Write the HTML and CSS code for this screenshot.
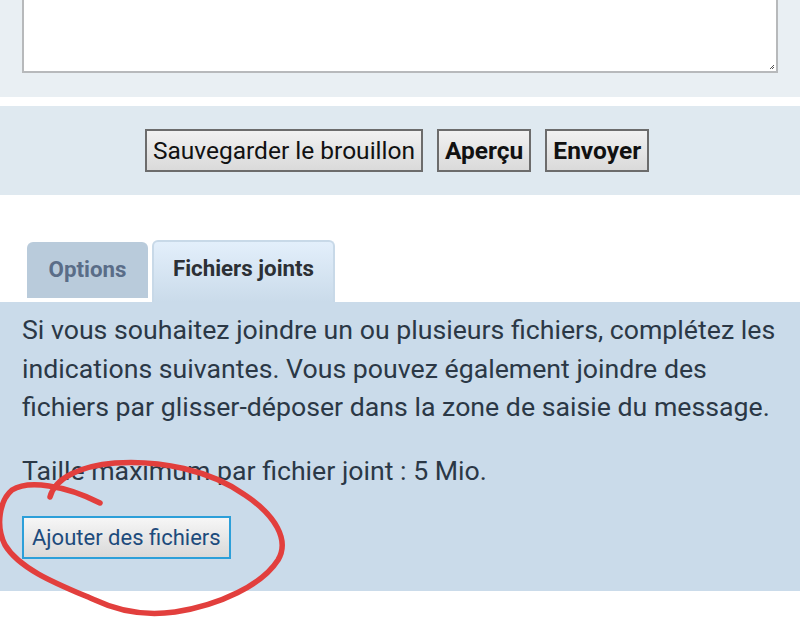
FILE: index.html
```html
<!DOCTYPE html>
<html lang="fr">
<head>
<meta charset="utf-8">
<title>Fichiers joints</title>
<link rel="stylesheet" href="styles.css">
</head>
<body>
<div class="page">
  <section class="editor">
    <div class="textarea">
      <svg class="grip" width="6" height="6" viewBox="0 0 6 6"><path d="M5,1 L1,5 M5,3 L3,5" stroke="#555" stroke-width="1"/></svg>
    </div>
  </section>
  <section class="actions">
    <button class="btn">Sauvegarder le brouillon</button>
    <button class="btn btn-bold">Aperçu</button>
    <button class="btn btn-bold">Envoyer</button>
  </section>
  <nav class="tabs">
    <div class="tab tab-inactive">Options</div>
    <div class="tab tab-active">Fichiers joints</div>
  </nav>
  <section class="panel">
    <p class="para">Si vous souhaitez joindre un ou plusieurs fichiers, complétez les indications suivantes. Vous pouvez également joindre des fichiers par glisser-déposer dans la zone de saisie du message.</p>
    <p class="para para-max">Taille maximum par fichier joint : 5 Mio.</p>
    <button class="add-btn">Ajouter des fichiers</button>
  </section>
  <svg class="scribble" width="800" height="617" viewBox="0 0 800 617">
    <path d="M50,497 C55,478 80,466 115,463 C160,460 210,470 245,495 C275,515 290,540 278,560 C262,585 220,605 175,612 C145,616 120,612 95,600 C60,585 20,570 5,545 C-5,525 0,500 12,490 C28,480 65,485 100,503" fill="none" stroke="#e23f3d" stroke-width="5.5" stroke-linecap="round" stroke-linejoin="round"/>
  </svg>
</div>
</body>
</html>
```

FILE: styles.css
```css
* { box-sizing: border-box; }
html, body { margin: 0; padding: 0; background: #ffffff; }
body { font-family: Roboto, "Noto Sans", sans-serif; }
.page { position: relative; width: 800px; height: 617px; overflow: hidden; }

.editor {
  background: #e9eff3;
  height: 97px;
  padding: 0 22px;
}
.textarea {
  position: relative;
  height: 73px;
  background: #ffffff;
  border: 2px solid #b7b9bb;
  border-top: none;
}
.grip {
  position: absolute;
  right: 1px;
  bottom: 1px;
}

.actions {
  margin-top: 9px;
  background: #dfe9f0;
  height: 89px;
  padding-top: 23px;
  display: flex;
  justify-content: center;
  align-items: flex-start;
  gap: 14px;
  padding-right: 6px;
}
.btn {
  height: 43px;
  padding: 0 6px;
  font-family: Roboto, sans-serif;
  font-size: 24.5px;
  color: #111;
  background: linear-gradient(#f1f1f1, #dadada);
  border: 2px solid #6c6c6c;
  border-radius: 0;
}
.btn-bold { font-weight: 700; }

.tabs {
  display: flex;
  align-items: flex-end;
  gap: 4px;
  padding-left: 27px;
  margin-top: 45px;
  height: 62px;
}
.tab {
  font-weight: 700;
  font-size: 22.3px;
  display: flex;
  justify-content: center;
  border-radius: 6px 6px 0 0;
}
.tab-inactive {
  width: 121px;
  height: 56px;
  margin-bottom: 4px;
  padding-top: 14px;
  background: #b9cbdb;
  color: #5a6d88;
}
.tab-active {
  width: 183px;
  height: 62px;
  padding-top: 13px;
  background: linear-gradient(#e3effb, #cadbea);
  border: 2px solid #c8d9e8;
  border-bottom: none;
  color: #2c3035;
}

.panel {
  background: #cadbea;
  height: 289px;
  padding: 9px 10px 0 22px;
}
.para {
  margin: 0;
  font-size: 26.7px;
  line-height: 38.5px;
  color: #2b3846;
}
.para-max { margin-top: 25px; }
.add-btn {
  display: block;
  margin-top: 26px;
  height: 43px;
  padding: 0 8px;
  font-family: Roboto, sans-serif;
  font-size: 22px;
  color: #1d4b7c;
  background: linear-gradient(#f6f6f6, #d9d9d9);
  border: 2px solid #2c9fd9;
  border-radius: 0;
}

.scribble {
  position: absolute;
  left: 0;
  top: 0;
  pointer-events: none;
}
```
